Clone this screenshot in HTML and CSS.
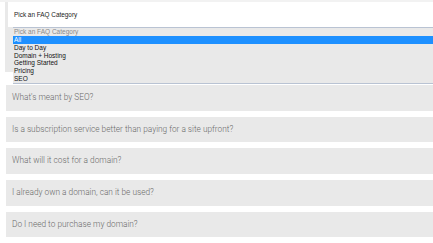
FILE: index.html
```html
<!DOCTYPE html>
<html lang="en">
<head>
    <meta charset="UTF-8">
    <meta name="viewport" content="width=device-width, initial-scale=1.0">
    <title>FAQ</title>
    <link rel="stylesheet" href="styles.css">
</head>
<body>
    <div class="top-line"></div>
    <div class="faq">
        <!-- Category picker, shown with its list open -->
        <div class="filter">
            <div class="select-box">Pick an FAQ Category</div>
            <ul class="select-list">
                <li class="placeholder">Pick an FAQ Category</li>
                <li class="active">All</li>
                <li>Day to Day</li>
                <li>Domain + Hosting</li>
                <li>Getting Started</li>
                <li>Pricing</li>
                <li>SEO</li>
            </ul>
        </div>

        <div class="questions">
            <div class="question">What's meant by SEO?</div>
            <div class="question">Is a subscription service better than paying for a site upfront?</div>
            <div class="question">What will it cost for a domain?</div>
            <div class="question">I already own a domain, can it be used?</div>
            <div class="question">Do I need to purchase my domain?</div>
        </div>
    </div>
</body>
</html>
```

FILE: styles.css
```css
body {
    margin: 0;
    background-color: #fff;
    font-family: Roboto, "Liberation Sans", Arial, sans-serif;
    overflow: hidden;
}

.top-line {
    height: 2px;
    background-color: #f2f2f2;
}

.faq {
    margin-left: 5px;
}

.filter {
    position: relative;
    height: 70px;
    padding-left: 3px;
    background-color: #e9e9e9;
    margin-bottom: 13px;
}

.select-box {
    height: 25px;
    line-height: 26px;
    padding-left: 6px;
    background-color: #fff;
    font-family: "Liberation Sans", Arial, sans-serif;
    font-size: 6.4px;
    color: #222;
}

.select-list {
    position: absolute;
    left: 8px;
    top: 25px;
    right: 0;
    margin: 0;
    padding: 0;
    list-style: none;
    background-color: #e9e9e9;
    border-top: 1px solid #b9c3d3;
    border-bottom: 1px solid #b9c3d3;
    font-family: "Liberation Sans", Arial, sans-serif;
    font-size: 6.5px;
    color: #111;
}

.select-list li {
    height: 7.86px;
    line-height: 7.86px;
    padding-left: 1px;
}

.select-list .placeholder {
    color: #8a8a8a;
}

.select-list .active {
    background-color: #1e90ff;
    color: #fff;
}

.questions {
    display: flex;
    flex-direction: column;
    gap: 6px;
}

.question {
    height: 25.7px;
    line-height: 25.7px;
    margin-left: 1px;
    padding-left: 6px;
    background-color: #e9e9e9;
    font-size: 8.3px;
    font-weight: 300;
    color: #6a6a6a;
}
```
